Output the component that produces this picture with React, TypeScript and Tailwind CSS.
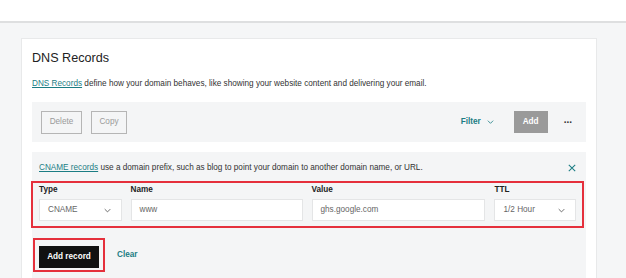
import React from 'react';

const Chevron: React.FC<{ className?: string }> = ({ className }) => (
    <svg viewBox="0 0 10 6" className={className} fill="none" stroke="currentColor" strokeWidth={1.2}>
        <path d="M1 1l4 4 4-4" />
    </svg>
);

const Field: React.FC<{ label: string; value: string; width: string; select?: boolean }> = ({ label, value, width, select }) => (
    <div className={`flex flex-col ${width}`}>
        <span className="text-[8.2px] font-bold text-[#222] leading-[12px] mb-[3px]">{label}</span>
        <div className="h-[22px] bg-white border border-[#e4e5e6] flex items-center justify-between pl-[8px] pr-[10px]">
            <span className="text-[8.2px] text-[#666]">{value}</span>
            {select && <Chevron className="w-[7px] h-[5px] text-[#555]" />}
        </div>
    </div>
);

const App: React.FC = () => {
    return (
        <div className="w-[626px] h-[278px] overflow-hidden bg-[#f5f6f7]" style={{ fontFamily: '"Liberation Sans", Arial, sans-serif' }}>
            {/* Top bar */}
            <div className="h-[23px] bg-white border-b-[2px] border-[#dedfe0]" />

            <div className="pl-[21px] pt-[15px]">
                <div className="w-[576px] bg-white border border-[#e8e9ea] px-[10px] pt-[10px] pb-[20px]">
                    <h1 className="text-[12.6px] leading-[18px] text-[#222] font-normal">DNS Records</h1>
                    <p className="mt-[11px] text-[8.2px] leading-[12px] text-[#333]">
                        <span className="text-[#1b7d84] underline">DNS Records</span> define how your domain behaves, like showing your website content and delivering your email.
                    </p>

                    {/* Toolbar */}
                    <div className="mt-[12px] h-[40px] bg-[#f4f5f6] flex items-center pl-[9px] pr-[14px]">
                        <button className="h-[23px] w-[41px] border border-[#b5b5b5] text-[8.2px] text-[#9a9a9a]">Delete</button>
                        <button className="ml-[9px] h-[23px] w-[36px] border border-[#b5b5b5] text-[8.2px] text-[#9a9a9a]">Copy</button>
                        <div className="flex-1" />
                        <span className="text-[8.2px] font-bold text-[#1b7d84]">Filter</span>
                        <Chevron className="ml-[6px] w-[7px] h-[4px] text-[#1b7d84]" />
                        <button className="ml-[20px] h-[22px] w-[34px] bg-[#9a9a9a] text-white text-[8.2px] font-bold">Add</button>
                        <span className="ml-[16px] text-[10px] font-bold text-[#333] leading-none -mt-[4px]">...</span>
                    </div>

                    {/* CNAME section */}
                    <div className="mt-[10px] bg-[#f4f5f6] pt-[9px] pb-[6px]">
                        <div className="flex items-center justify-between pl-[7px] pr-[10px] h-[14px]">
                            <p className="text-[8.2px] text-[#333]">
                                <span className="text-[#1b7d84] underline">CNAME records</span> use a domain prefix, such as blog to point your domain to another domain name, or URL.
                            </p>
                            <svg viewBox="0 0 10 10" className="w-[8px] h-[8px] text-[#1b7d84]" fill="none" stroke="currentColor" strokeWidth={1.3}>
                                <path d="M1 1l8 8M9 1l-8 8" />
                            </svg>
                        </div>

                        <div className="mt-[6px] -ml-[1px] mr-[2px] border-2 border-[#e5303c] flex gap-[9px] px-[6px] pt-[1px] pb-[5px]">
                            <Field label="Type" value="CNAME" width="w-[83px]" select />
                            <Field label="Name" value="www" width="w-[173px]" />
                            <Field label="Value" value="ghs.google.com" width="w-[175px]" />
                            <Field label="TTL" value="1/2 Hour" width="w-[82px]" select />
                        </div>

                        <div className="mt-[10px] flex items-center">
                            <div className="ml-[1px] border-2 border-[#e5303c] px-[4px] py-[2px]">
                                <button className="h-[22px] w-[60px] bg-[#111] text-white text-[8.2px] font-bold">Add record</button>
                            </div>
                            <span className="ml-[12px] text-[8.2px] font-bold text-[#1b7d84]">Clear</span>
                        </div>
                    </div>
                </div>
            </div>
        </div>
    );
};

export default App;
